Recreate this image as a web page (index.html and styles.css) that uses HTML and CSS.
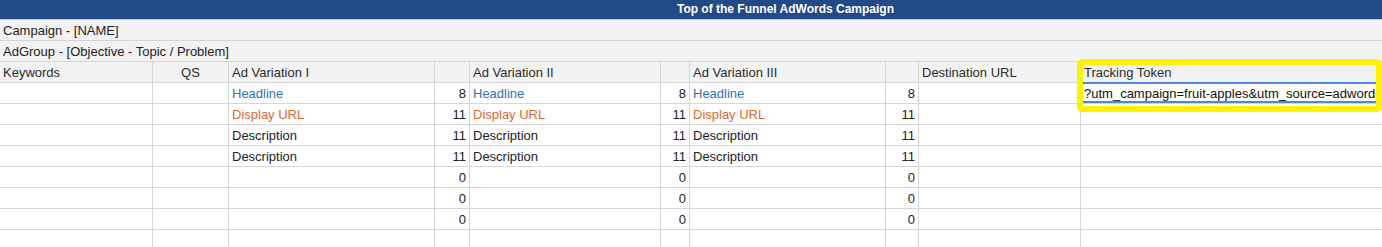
FILE: index.html
```html
<!DOCTYPE html>
<html>
<head>
<meta charset="utf-8">
<link rel="stylesheet" href="styles.css">
</head>
<body>
<div class="sheet">
  <div class="title">Top of the Funnel AdWords Campaign</div>
  <div class="band">Campaign - [NAME]</div>
  <div class="band">AdGroup - [Objective - Topic / Problem]</div>
  <div class="row head">
    <div class="c">Keywords</div><div class="c ctr">QS</div>
    <div class="c">Ad Variation I</div><div class="c"></div>
    <div class="c">Ad Variation II</div><div class="c"></div>
    <div class="c">Ad Variation III</div><div class="c"></div>
    <div class="c">Destination URL</div><div class="c">Tracking Token</div>
  </div>
  <div class="row">
    <div class="c"></div><div class="c"></div>
    <div class="c blue">Headline</div><div class="c num">8</div>
    <div class="c blue">Headline</div><div class="c num">8</div>
    <div class="c blue">Headline</div><div class="c num">8</div>
    <div class="c"></div><div class="c token">?utm_campaign=fruit-apples&amp;utm_source=adwords</div>
  </div>
  <div class="row">
    <div class="c"></div><div class="c"></div>
    <div class="c orange">Display URL</div><div class="c num">11</div>
    <div class="c orange">Display URL</div><div class="c num">11</div>
    <div class="c orange">Display URL</div><div class="c num">11</div>
    <div class="c"></div><div class="c"></div>
  </div>
  <div class="row">
    <div class="c"></div><div class="c"></div>
    <div class="c">Description</div><div class="c num">11</div>
    <div class="c">Description</div><div class="c num">11</div>
    <div class="c">Description</div><div class="c num">11</div>
    <div class="c"></div><div class="c"></div>
  </div>
  <div class="row">
    <div class="c"></div><div class="c"></div>
    <div class="c">Description</div><div class="c num">11</div>
    <div class="c">Description</div><div class="c num">11</div>
    <div class="c">Description</div><div class="c num">11</div>
    <div class="c"></div><div class="c"></div>
  </div>
  <div class="row">
    <div class="c"></div><div class="c"></div>
    <div class="c"></div><div class="c num">0</div>
    <div class="c"></div><div class="c num">0</div>
    <div class="c"></div><div class="c num">0</div>
    <div class="c"></div><div class="c"></div>
  </div>
  <div class="row">
    <div class="c"></div><div class="c"></div>
    <div class="c"></div><div class="c num">0</div>
    <div class="c"></div><div class="c num">0</div>
    <div class="c"></div><div class="c num">0</div>
    <div class="c"></div><div class="c"></div>
  </div>
  <div class="row">
    <div class="c"></div><div class="c"></div>
    <div class="c"></div><div class="c num">0</div>
    <div class="c"></div><div class="c num">0</div>
    <div class="c"></div><div class="c num">0</div>
    <div class="c"></div><div class="c"></div>
  </div>
  <div class="row">
    <div class="c"></div><div class="c"></div>
    <div class="c"></div><div class="c"></div>
    <div class="c"></div><div class="c"></div>
    <div class="c"></div><div class="c"></div>
    <div class="c"></div><div class="c"></div>
  </div>
  <div class="selection"></div>
  <div class="highlight"></div>
</div>
</body>
</html>
```
FILE: styles.css
```css
html, body {
  margin: 0;
  padding: 0;
  background: #ffffff;
}
.sheet {
  position: relative;
  width: 1382px;
  height: 247px;
  overflow: hidden;
  font-family: "Liberation Sans", Arial, Helvetica, sans-serif;
  font-size: 13px;
  color: #222222;
}
.title {
  box-sizing: border-box;
  height: 20px;
  line-height: 19px;
  background: #224a87;
  border-bottom: 1px solid #c9cdd4;
  color: #ffffff;
  font-weight: bold;
  font-size: 12px;
  text-align: center;
  padding-left: 189px;
}
.band {
  box-sizing: border-box;
  height: 21px;
  line-height: 22px;
  background: #f2f2f2;
  border-bottom: 1px solid #d6d6d6;
  padding-left: 3px;
  overflow: hidden;
}
.row {
  display: grid;
  grid-template-columns: 153px 76px 206px 35px 191px 29px 196px 33px 162px 1fr;
  height: 21px;
}
.row.head {
  background: #f2f2f2;
  color: #2b2b2b;
}
.c {
  box-sizing: border-box;
  height: 21px;
  line-height: 22px;
  padding: 0 3px;
  border-right: 1px solid #d6d6d6;
  border-bottom: 1px solid #d6d6d6;
  white-space: nowrap;
  overflow: hidden;
}
.c:last-child {
  border-right: none;
}
.ctr {
  text-align: center;
}
.num {
  text-align: right;
}
.blue {
  color: #3471b8;
}
.orange {
  color: #d9692f;
}
.token {
  color: #111111;
  padding-right: 0;
}
.selection {
  position: absolute;
  left: 1081px;
  top: 82px;
  width: 301px;
  height: 17px;
  border-top: 2px solid #4a89dc;
  border-bottom: 2px solid #4a89dc;
}
.highlight {
  position: absolute;
  left: 1077px;
  top: 59px;
  width: 293px;
  height: 41px;
  border: 6px solid #fff200;
  border-radius: 5px;
}
```
